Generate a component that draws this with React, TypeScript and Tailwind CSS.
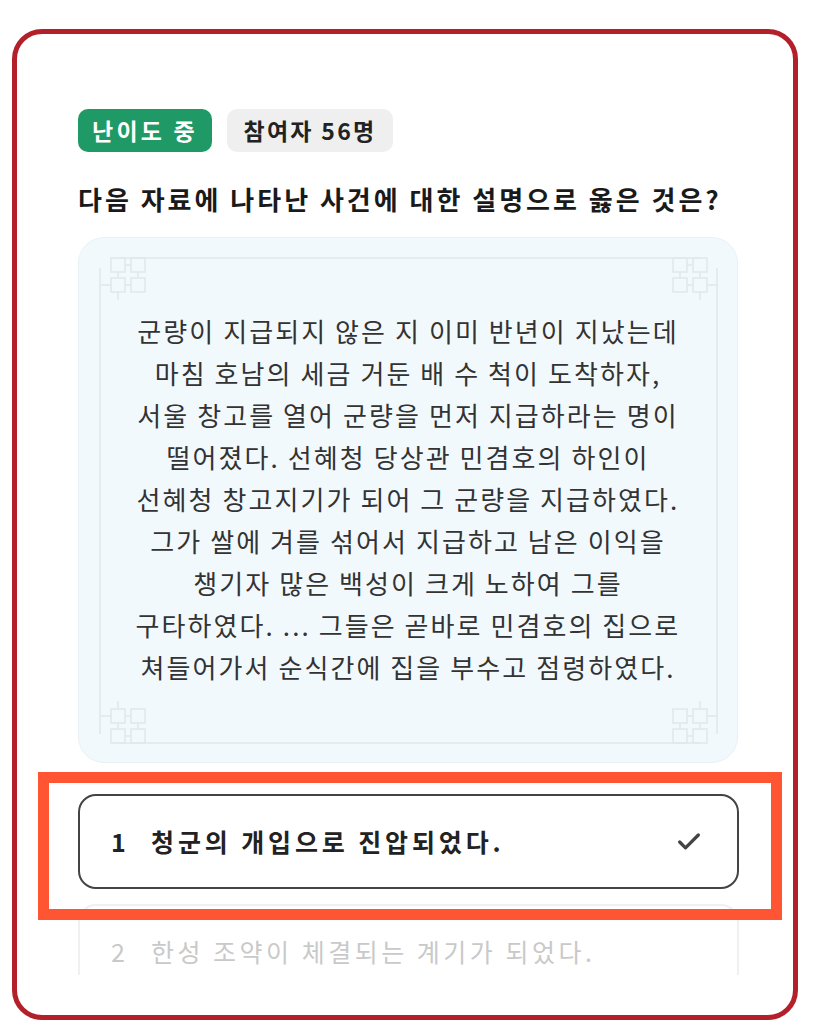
import { Check } from "lucide-react";

const font = { fontFamily: '"Noto Sans CJK KR", "Noto Sans", sans-serif' };

const passage = [
  "군량이 지급되지 않은 지 이미 반년이 지났는데",
  "마침 호남의 세금 거둔 배 수 척이 도착하자,",
  "서울 창고를 열어 군량을 먼저 지급하라는 명이",
  "떨어졌다. 선혜청 당상관 민겸호의 하인이",
  "선혜청 창고지기가 되어 그 군량을 지급하였다.",
  "그가 쌀에 겨를 섞어서 지급하고 남은 이익을",
  "챙기자 많은 백성이 크게 노하여 그를",
  "구타하였다. ... 그들은 곧바로 민겸호의 집으로",
  "쳐들어가서 순식간에 집을 부수고 점령하였다.",
];

function Knot({ x, y, flipX, flipY }: { x: number; y: number; flipX?: boolean; flipY?: boolean }) {
  const sx = flipX ? -1 : 1;
  const sy = flipY ? -1 : 1;
  return (
    <g transform={`translate(${x} ${y}) scale(${sx} ${sy})`}>
      <rect x="0" y="0" width="14" height="14" />
      <rect x="20" y="0" width="14" height="14" />
      <rect x="0" y="20" width="14" height="14" />
      <rect x="20" y="20" width="14" height="14" />
      <path d="M7 14 V20 M27 14 V20 M14 7 H20 M14 27 H20 M-11 27 H0 M7 34 V42" />
    </g>
  );
}

function Frame() {
  return (
    <svg
      className="pointer-events-none absolute inset-0"
      width="660"
      height="526"
      viewBox="0 0 660 526"
      fill="none"
      stroke="#e1e8eb"
      strokeWidth="1.6"
    >
      <path d="M40 20 H620 M40 505 H620 M21 30 V496 M638 30 V496" />
      <Knot x={32} y={20} />
      <Knot x={628} y={20} flipX />
      <Knot x={32} y={505} flipY />
      <Knot x={628} y={505} flipX flipY />
    </svg>
  );
}

export default function App() {
  return (
    <div className="h-[1024px] w-[819px] overflow-hidden bg-white pl-[12px] pt-[29px]" style={font}>
      <div className="relative h-[991px] w-[786px] overflow-hidden rounded-[30px] border-[5px] border-[#b3202a] bg-white">
        <div className="h-[941px] overflow-hidden pl-[61px] pr-[52px] pt-[75px]">
          <div className="flex gap-[15px]">
            <span className="flex h-[43px] w-[134px] items-center justify-center rounded-[10px] bg-[#1f9a66] text-[23px] font-semibold tracking-[0.14em] text-white">
              난이도 중
            </span>
            <span className="flex h-[43px] w-[166px] items-center justify-center rounded-[10px] bg-[#efefef] text-[23px] font-semibold tracking-[0.1em] text-[#222]">
              참여자 56명
            </span>
          </div>

          <h2 className="mt-[31px] whitespace-nowrap text-[26px] font-bold leading-[32px] tracking-[0.115em] text-[#1a1a1a]">
            다음 자료에 나타난 사건에 대한 설명으로 옳은 것은?
          </h2>

          <div className="relative mt-[22px] h-[526px] w-[660px] rounded-[26px] border border-[#e9f1f5] bg-[#f2f9fd] pt-[72px]">
            <Frame />
            <div className="relative whitespace-nowrap text-center text-[26px] leading-[42px] tracking-[0.08em] text-[#333]">
              {passage.map((l) => (
                <p key={l}>{l}</p>
              ))}
            </div>
          </div>

          <div className="mt-[31px] flex w-[661px] flex-col gap-[15px]">
            <div className="flex h-[95px] items-center rounded-[18px] border-2 border-[#444] pl-[31px] pr-[34px]">
              <span className="w-[40px] text-[25px] font-bold text-[#222]">1</span>
              <span className="flex-1 whitespace-nowrap text-[25px] font-bold tracking-[0.155em] text-[#222]">
                청군의 개입으로 진압되었다.
              </span>
              <Check className="h-[28px] w-[28px] text-[#444]" strokeWidth={2.8} />
            </div>
            <div className="flex h-[95px] items-center rounded-[18px] border-2 border-[#f0f0f0] pl-[31px] pr-[36px]">
              <span className="w-[40px] text-[25px] text-[#c9c9c9]">2</span>
              <span className="flex-1 whitespace-nowrap text-[25px] tracking-[0.14em] text-[#c9c9c9]">
                한성 조약이 체결되는 계기가 되었다.
              </span>
            </div>
          </div>
        </div>

        <div className="pointer-events-none absolute left-[21px] top-[738px] h-[148px] w-[744px] border-[11px] border-[#ff5533]" />
      </div>
    </div>
  );
}
